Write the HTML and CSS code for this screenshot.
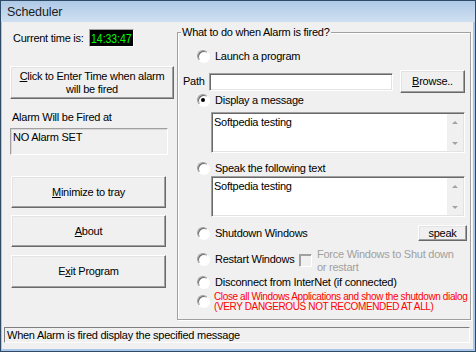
FILE: index.html
```html
<!DOCTYPE html>
<html lang="en">
<head>
    <meta charset="UTF-8">
    <title>Scheduler</title>
    <link rel="stylesheet" href="styles.css">
</head>
<body>
    <div class="window">
        <div class="titlebar">Scheduler</div>
        <div class="client">
            <div class="main">
                <div class="left">
                    <div class="clock-row">
                        <span class="clock-label">Current time is:</span>
                        <span class="clock"><span class="digits">14:33:47</span></span>
                    </div>
                    <button class="btn btn-set"><u>C</u>lick to Enter Time when alarm<br>will be fired</button>
                    <div class="alarm-label">Alarm Will be Fired at</div>
                    <div class="alarm-box">NO Alarm SET</div>
                    <button class="btn btn-side btn-min"><u>M</u>inimize to tray</button>
                    <button class="btn btn-side btn-about"><u>A</u>bout</button>
                    <button class="btn btn-side btn-exit">E<u>x</u>it Program</button>
                </div>

                <div class="group">
                    <span class="legend">What to do when Alarm is fired?</span>

                    <div class="opt opt-launch"><span class="radio"></span><span>Launch a program</span></div>
                    <div class="path-row">
                        <span class="path-label">Path</span>
                        <span class="path-input"></span>
                        <button class="btn btn-browse"><u>B</u>rowse..</button>
                    </div>
                    <div class="opt"><span class="radio checked"></span><span>Display a message</span></div>
                    <div class="memo memo-msg">
                        <div class="memo-text">Softpedia testing</div>
                        <div class="scroll"><span class="arrow up"></span><span class="arrow down"></span></div>
                    </div>
                    <div class="opt opt-speak"><span class="radio"></span><span>Speak the following text</span></div>
                    <div class="memo memo-speak">
                        <div class="memo-text">Softpedia testing</div>
                        <div class="scroll"><span class="arrow up"></span><span class="arrow down"></span></div>
                    </div>
                    <div class="shutdown-row">
                        <div class="opt"><span class="radio"></span><span>Shutdown Windows</span></div>
                        <button class="btn btn-speak">speak</button>
                    </div>
                    <div class="restart-row">
                        <div class="opt opt-restart"><span class="radio"></span><span class="restart-label">Restart Windows</span></div>
                        <span class="check"></span>
                        <span class="force-label">Force Windows to Shut down<br>or restart</span>
                    </div>
                    <div class="opt opt-disconnect"><span class="radio"></span><span>Disconnect from InterNet (if connected)</span></div>
                    <div class="close-row">
                        <div class="opt opt-close"><span class="radio"></span></div>
                        <span class="danger">Close all Windows Applications and show the shutdown dialog<br>(VERY DANGEROUS NOT RECOMENDED AT ALL)</span>
                    </div>
                </div>
            </div>
            <div class="status">When Alarm is fired display the specified message</div>
        </div>
    </div>
</body>
</html>
```

FILE: styles.css
```css
* {
    box-sizing: border-box;
}

body {
    margin: 0;
    font-family: "Liberation Sans", Arial, sans-serif;
    font-size: 11px;
    line-height: 13px;
    letter-spacing: -0.25px;
    color: #000;
    background: #f0f0f0;
}

.window {
    width: 476px;
    height: 352px;
    border: 1px solid #2f4a66;
    background: #a9c7e8;
    display: flex;
    flex-direction: column;
}

.titlebar {
    height: 21px;
    padding-left: 6px;
    font-size: 12.5px;
    line-height: 22px;
    letter-spacing: -0.1px;
    color: #1b1b1b;
    background: linear-gradient(#aec9e7, #d0e0f1);
}

.client {
    margin: 0 2px 2px 1px;
    height: 327px;
    background: #f0f0f0;
    display: flex;
    flex-direction: column;
}

.main {
    display: flex;
    align-items: flex-start;
    height: 298px;
}

/* left column */
.left {
    width: 175px;
    padding-left: 8px;
    margin-top: 7px;
    display: flex;
    flex-direction: column;
    align-items: flex-start;
}

.clock-row {
    display: flex;
    align-items: center;
    height: 18px;
}

.clock-label {
    margin-left: 3px;
    width: 76px;
}

.clock {
    width: 45px;
    height: 18px;
    background: #000;
    border: 1px solid;
    border-color: #a0a0a0 #fff #fff #a0a0a0;
    display: flex;
    align-items: center;
    justify-content: center;
}

.digits {
    display: inline-block;
    font-size: 13px;
    letter-spacing: 0;
    color: #00ff00;
    transform: scaleX(0.8);
}

.btn {
    font: inherit;
    letter-spacing: inherit;
    color: #000;
    padding: 0;
    background: #f0f0f0;
    border: 1px solid;
    border-color: #fff #696969 #696969 #fff;
    box-shadow: inset -1px -1px 0 #a0a0a0, inset 1px 1px 0 #e3e3e3;
}

.btn-set {
    margin-top: 19px;
    width: 164px;
    height: 33px;
    line-height: 13px;
}

.alarm-label {
    margin-top: 12px;
    margin-left: 2px;
}

.alarm-box {
    margin-top: 4px;
    width: 158px;
    height: 27px;
    padding: 2px 2px;
    border: 1px solid;
    border-color: #a0a0a0 #fff #fff #a0a0a0;
    box-shadow: inset 1px 1px 0 #d8d8d8;
}

.btn-side {
    margin-left: 1px;
    width: 155px;
    height: 32px;
}

.btn-min {
    margin-top: 21px;
}

.btn-about {
    margin-top: 7px;
}

.btn-exit {
    margin-top: 8px;
    height: 33px;
}

/* group box */
.group {
    position: relative;
    margin-top: 10px;
    width: 294px;
    height: 288px;
    border: 1px solid #a0a0a0;
    box-shadow: inset 1px 1px 0 #fff, 1px 1px 0 #fff;
    display: flex;
    flex-direction: column;
    align-items: flex-start;
}

.legend {
    position: absolute;
    left: 3px;
    top: -7px;
    padding: 0 1px;
    background: #f0f0f0;
}

.opt {
    display: flex;
    align-items: center;
    gap: 6px;
    height: 14px;
    padding-left: 19px;
}

.radio {
    position: relative;
    width: 12px;
    height: 12px;
    border-radius: 50%;
    background: #fff;
    border: 1px solid;
    border-color: #a0a0a0 #fff #fff #a0a0a0;
    box-shadow: inset 1px 1px 0 #696969, 1px 1px 0 #fff;
}

.radio.checked::after {
    content: "";
    position: absolute;
    left: 3px;
    top: 3px;
    width: 4px;
    height: 4px;
    border-radius: 50%;
    background: #000;
}

.opt-launch {
    margin-top: 16px;
}

.path-row {
    display: flex;
    align-items: center;
    margin-top: 7px;
    height: 23px;
    padding-left: 5px;
}

.path-label {
    width: 26px;
}

.path-input {
    width: 184px;
    height: 18px;
    background: #fff;
    border: 1px solid;
    border-color: #a0a0a0 #fff #fff #a0a0a0;
    box-shadow: inset 1px 1px 0 #696969, inset -1px -1px 0 #e3e3e3;
}

.btn-browse {
    margin-left: 7px;
    width: 65px;
    height: 23px;
}

.memo {
    display: flex;
    margin-left: 33px;
    width: 254px;
    height: 41px;
    background: #fff;
    border: 1px solid;
    border-color: #a0a0a0 #fff #fff #a0a0a0;
    box-shadow: inset 1px 1px 0 #696969, inset -1px -1px 0 #e3e3e3;
    padding: 1px;
}

.memo-msg {
    margin-top: 5px;
}

.memo-speak {
    margin-top: 1px;
}

.memo-text {
    flex: 1;
    padding: 2px 1px;
}

.scroll {
    width: 16px;
    background: #f0f0f0;
    display: flex;
    flex-direction: column;
    justify-content: space-between;
    align-items: center;
    padding: 7px 0 6px;
}

.arrow {
    width: 0;
    height: 0;
    border-left: 3px solid transparent;
    border-right: 3px solid transparent;
}

.arrow.up {
    border-bottom: 3px solid #a3a3a3;
}

.arrow.down {
    border-top: 3px solid #a3a3a3;
}

.opt-speak {
    margin-top: 8px;
}

.shutdown-row {
    display: flex;
    align-items: center;
    justify-content: space-between;
    align-self: stretch;
    margin-top: 8px;
    height: 16px;
    padding-right: 3px;
}

.btn-speak {
    width: 49px;
    height: 16px;
    line-height: 12px;
}

.restart-row {
    display: flex;
    align-items: flex-start;
    margin-top: 7px;
    height: 26px;
}

.opt-restart {
    margin-top: 4px;
}

.restart-label {
    width: 84px;
}

.check {
    margin-top: 6px;
    width: 13px;
    height: 13px;
    background: #f0f0f0;
    border: 1px solid;
    border-color: #a0a0a0 #fff #fff #a0a0a0;
    box-shadow: inset 1px 1px 0 #a0a0a0;
}

.force-label {
    margin-left: 5px;
    color: #a0a0a0;
}

.opt-disconnect {
    margin-top: 1px;
}

.close-row {
    display: flex;
    align-items: flex-start;
    margin-top: 3px;
}

.opt-close {
    margin-top: 2px;
}

.danger {
    margin-left: 5px;
    font-size: 10px;
    line-height: 10px;
    letter-spacing: -0.37px;
    color: #ff0000;
}

.status {
    margin: 7px 0 0 2px;
    width: 466px;
    height: 16px;
    padding-left: 2px;
    line-height: 14px;
    border: 1px solid;
    border-color: #808080 #fff #fff #808080;
}
```
